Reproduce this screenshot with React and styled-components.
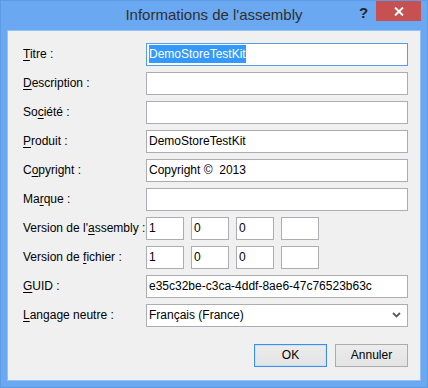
import React from "react";
import styled, { createGlobalStyle } from "styled-components";

const Global = createGlobalStyle`
html, body {
    margin: 0;
    padding: 0;
    background: #ffffff;
}
* { box-sizing: border-box; }
`

const Window = styled.div`
display: flex;
flex-flow: column;
width: 428px;
height: 388px;
background: #6aa9f2;
border: 1px solid #5d9be3;
font-family: "Liberation Sans", Arial, sans-serif;
`

const TitleBar = styled.div`
position: relative;
display: flex;
align-items: center;
justify-content: center;
height: 29px;
flex: none;
`

const Title = styled.div`
font-size: 15px;
color: #2f2f2f;
padding-bottom: 2px;
`

const HelpGlyph = styled.div`
position: absolute;
left: 358px;
top: 3px;
font-size: 15px;
font-weight: bold;
color: #252525;
`

const CloseButton = styled.div`
position: absolute;
left: 375px;
top: 0px;
width: 45px;
height: 20px;
background: #c75050;
display: flex;
align-items: center;
justify-content: center;
`

const Client = styled.div`
flex: 1;
margin: 0 6px 6px 6px;
border: 1px solid #93c1f5;
background: #f0f0f0;
display: flex;
flex-flow: column;
padding: 12px 12px 0 15px;
`

const Form = styled.div`
display: grid;
grid-template-columns: 123px 262px;
grid-auto-rows: 23px;
row-gap: 6px;
`

const Label = styled.div`
font-size: 12px;
line-height: 22px;
color: #000;
white-space: nowrap;
`

const Key = styled.span`
text-decoration: underline;
text-underline-offset: 2px;
`

const Field = styled.div`
height: 23px;
width: ${p => p.width ? p.width + "px" : "100%"};
background: #ffffff;
border: 1px solid ${p => p.focused ? "#569de5" : "#abadb3"};
padding: 0 2px;
font-size: 12px;
line-height: 20px;
color: #000;
white-space: pre;
overflow: hidden;
`

const Selected = styled.span`
background: #3399ff;
color: #ffffff;
padding: 2px 0 2px 0;
`

const VersionRow = styled.div`
display: flex;
gap: 7px;
`

const Select = styled(Field)`
display: flex;
align-items: center;
justify-content: space-between;
padding-right: 6px;
padding-bottom: 1px;
`

const Footer = styled.div`
display: flex;
justify-content: flex-end;
gap: 8px;
margin-top: 17px;
`

const Button = styled.div`
width: 73px;
height: 23px;
display: flex;
align-items: center;
justify-content: center;
font-size: 12px;
color: #000;
background: linear-gradient(#ececec, #e3e3e3);
border: 1px solid ${p => p.primary ? "#3c8fe6" : "#acacac"};
box-shadow: ${p => p.primary ? "inset 0 0 0 1px #c9e1f9" : "none"};
padding-bottom: 1px;
`

const rows = [
    { label: <><Key>T</Key>itre :</>, value: <Selected>DemoStoreTestKit</Selected>, focused: true },
    { label: <><Key>D</Key>escription :</>, value: "" },
    { label: <>So<Key>c</Key>iété :</>, value: "" },
    { label: <><Key>P</Key>roduit :</>, value: "DemoStoreTestKit" },
    { label: <>C<Key>o</Key>pyright :</>, value: "Copyright ©  2013" },
    { label: <>Ma<Key>r</Key>que :</>, value: "" },
]

const Version = ({ values }) => (
    <VersionRow>
        {values.map((v, i) => <Field key={i} width={38}>{v}</Field>)}
    </VersionRow>
)

export default function App() {
    return (
        <>
            <Global />
            <Window>
                <TitleBar>
                    <Title>Informations de l'assembly</Title>
                    <HelpGlyph>?</HelpGlyph>
                    <CloseButton>
                        <svg width="10" height="9" viewBox="0 0 10 9">
                            <path d="M1 0.5 L9 8.5 M9 0.5 L1 8.5" stroke="#fff" strokeWidth="2" />
                        </svg>
                    </CloseButton>
                </TitleBar>
                <Client>
                    <Form>
                        {rows.map((r, i) => (
                            <React.Fragment key={i}>
                                <Label>{r.label}</Label>
                                <Field focused={r.focused}>{r.value}</Field>
                            </React.Fragment>
                        ))}
                        <Label>Version de l'<Key>a</Key>ssembly :</Label>
                        <Version values={["1", "0", "0", ""]} />
                        <Label>{"Version de "}<Key>f</Key>ichier :</Label>
                        <Version values={["1", "0", "0", ""]} />
                        <Label><Key>G</Key>UID :</Label>
                        <Field>e35c32be-c3ca-4ddf-8ae6-47c76523b63c</Field>
                        <Label><Key>L</Key>angage neutre :</Label>
                        <Select>
                            <span>Français (France)</span>
                            <svg width="9" height="6" viewBox="0 0 9 6">
                                <path d="M1 1 L4.5 4.5 L8 1" stroke="#5a5a5a" strokeWidth="1.8" fill="none" />
                            </svg>
                        </Select>
                    </Form>
                    <Footer>
                        <Button primary>OK</Button>
                        <Button>Annuler</Button>
                    </Footer>
                </Client>
            </Window>
        </>
    )
}
